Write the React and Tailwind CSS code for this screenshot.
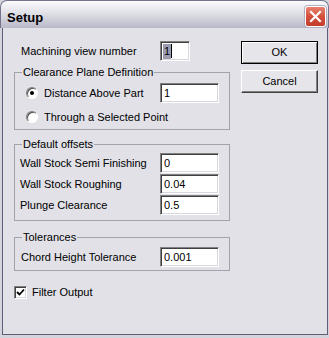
import React from 'react';

const sunken =
  'bg-white border border-t-[#808080] border-l-[#808080] border-b-white border-r-white shadow-[inset_1px_1px_#404040,inset_-1px_-1px_#d8d8dc]';

const Field = ({ value, w = 'w-[59px]' }) => (
  <div className={`${w} h-[20px] ${sunken} flex items-center pl-[3px]`}>{value}</div>
);

const Radio = ({ checked }) => (
  <span className="w-[12px] h-[12px] rounded-full border border-t-[#808080] border-l-[#808080] border-b-white border-r-white shadow-[inset_1px_1px_#505050] bg-white flex items-center justify-center">
    {checked && <span className="w-[4px] h-[4px] rounded-full bg-black" />}
  </span>
);

const Group = ({ title, className = '', children }) => (
  <fieldset className={`border border-[#a3a3ad] ${className}`}>
    <legend className="ml-[7px] px-[1px] leading-[13px]">{title}</legend>
    {children}
  </fieldset>
);

const Row = ({ label, value, className = '' }) => (
  <div className={`flex items-center h-[20px] ${className}`}>
    <span className="w-[145px] pl-[5px]">{label}</span>
    <Field value={value} />
  </div>
);

const App = () => {
  return (
    <div className="w-[329px] h-[338px] flex flex-col bg-[#d4d4dc] font-['Liberation_Sans',Arial,sans-serif] text-[11px] text-black">
      {/* Title bar */}
      <div className="h-[28px] shrink-0 rounded-t-[7px] border-t border-x border-[#74748c] bg-gradient-to-b from-[#fbfbfd] via-[#dcdce4] to-[#b9b9c9] flex items-start pl-[6px] pr-[2px]">
        <span className="mt-[10px] font-bold text-[13px] leading-none">Setup</span>
        <div className="ml-auto mt-[5px] w-[21px] h-[21px] rounded-[3px] border border-white bg-gradient-to-b from-[#e8806e] via-[#d4503c] to-[#c23c2a] flex items-center justify-center shadow-[0_0_0_1px_#b0b0c0]">
          <svg width="13" height="13" viewBox="0 0 13 13">
            <path d="M2 2 L11 11 M11 2 L2 11" stroke="#fff" strokeWidth="2.2" strokeLinecap="square" />
          </svg>
        </div>
      </div>

      {/* Client area */}
      <div className="flex-1 ml-[2px] mr-[1px] mb-[3px] border-x border-b border-[#5e5e78] bg-[#e1e1e7] flex">
        <div className="w-[216px] ml-[11px] mt-[13px]">
          <div className="flex items-center h-[20px]">
            <span className="w-[146px] pl-[7px]">Machining view number</span>
            <div className={`w-[30px] h-[20px] ${sunken} flex items-center pl-[2px]`}>
              <span className="bg-[#9c9cb0] px-[1px] leading-[15px]">1</span>
              <span className="w-[1px] h-[14px] bg-black" />
            </div>
          </div>

          <Group title="Clearance Plane Definition" className="mt-[5px] pb-[2px]">
            <div className="flex items-center h-[20px] mt-[4px]">
              <span className="w-[145px] pl-[11px] flex items-center gap-[6px]">
                <Radio checked />
                Distance Above Part
              </span>
              <Field value="1" />
            </div>
            <div className="flex items-center h-[20px] mt-[4px]">
              <span className="pl-[11px] flex items-center gap-[6px]">
                <Radio />
                Through a Selected Point
              </span>
            </div>
          </Group>

          <Group title="Default offsets" className="mt-[8px] pb-[5px]">
            <Row label="Wall Stock Semi Finishing" value="0" className="mt-[2px]" />
            <Row label="Wall Stock Roughing" value="0.04" className="mt-[1px]" />
            <Row label="Plunge Clearance" value="0.5" className="mt-[1px]" />
          </Group>

          <Group title="Tolerances" className="mt-[10px] pb-[3px]">
            <Row label="Chord Height Tolerance" value="0.001" className="mt-[3px] [&>span]:pl-[6px]" />
          </Group>

          <div className="flex items-center mt-[13px] gap-[5px]">
            <span className={`w-[13px] h-[13px] ${sunken} flex items-center justify-center`}>
              <svg width="9" height="9" viewBox="0 0 9 9">
                <path d="M1 4 L3.5 6.5 L8 1.5" stroke="#000" strokeWidth="1.8" fill="none" />
              </svg>
            </span>
            <span>Filter Output</span>
          </div>
        </div>

        <div className="ml-[11px] mt-[13px] flex flex-col gap-[6px]">
          <button className="w-[77px] h-[23px] border border-black bg-[#e6e6ea] shadow-[inset_1px_1px_#fff,inset_-1px_-1px_#808080] flex items-center justify-center">
            OK
          </button>
          <button className="w-[77px] h-[23px] border border-t-white border-l-white border-b-[#404040] border-r-[#404040] bg-[#e6e6ea] shadow-[inset_-1px_-1px_#808080] flex items-center justify-center">
            Cancel
          </button>
        </div>
      </div>
    </div>
  );
};

export default App;
